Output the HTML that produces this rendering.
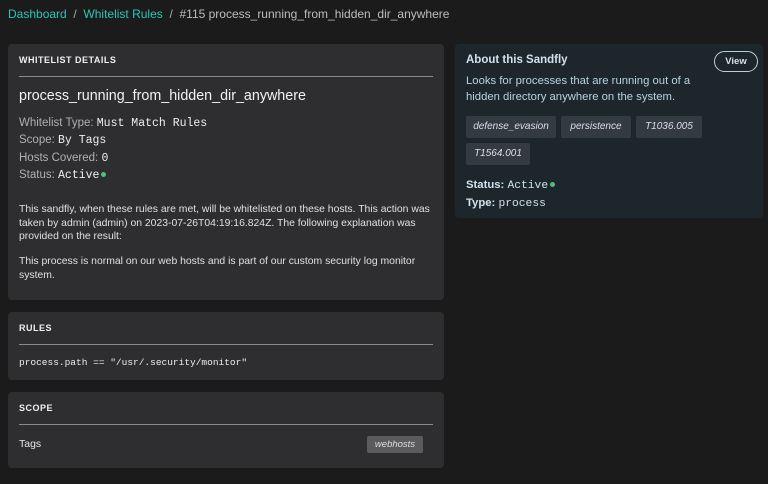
<!DOCTYPE html>
<html><head><style>
*{margin:0;padding:0;box-sizing:border-box}
body{width:768px;height:484px;background:#1b1b1c;font-family:"Liberation Sans",sans-serif;color:#e6e6e6;position:relative;overflow:hidden}
.a{position:absolute;white-space:nowrap}
.card{position:absolute;background:#2e2e30;border-radius:4px}
.h{font-size:9px;font-weight:bold;letter-spacing:.5px;color:#f0f0f0}
.hr{position:absolute;height:1px;background:#8a8a8a;left:11px;right:11px}
.m{font-family:"Liberation Mono",monospace;color:#eee}
.l{color:#b0b0b0}
.dot{display:inline-block;width:5px;height:5px;border-radius:50%;background:#4fbf80;margin-left:2px;vertical-align:1px}
.tag{position:absolute;background:#343b40;border-radius:2px;font-size:10px;font-style:italic;color:#dde;height:22px;line-height:22px;text-align:center}
</style></head><body>
<div class="a" style="left:8px;top:7px;font-size:12px"><span style="color:#2cc6b4">Dashboard</span> <span style="color:#aaa">&nbsp;/&nbsp;</span> <span style="color:#2cc6b4">Whitelist Rules</span> <span style="color:#aaa">&nbsp;/&nbsp;</span> <span style="color:#bdbdbd">#115 process_running_from_hidden_dir_anywhere</span></div>

<div class="card" style="left:8px;top:44px;width:436px;height:256px">
<div class="a h" style="left:11px;top:11px">WHITELIST DETAILS</div>
<div class="hr" style="top:32px"></div>
<div class="a" style="left:11px;top:44px;font-size:14.3px;color:#f2f2f2">process_running_from_hidden_dir_anywhere</div>
<div class="a" style="left:11px;top:71px;font-size:11.5px;line-height:16.3px"><span class="l">Whitelist Type:</span> <span class="m">Must Match Rules</span><br><span class="l">Scope:</span> <span class="m">By Tags</span><br><span class="l">Hosts Covered:</span> <span class="m">0</span><br><span class="l">Status:</span> <span class="m">Active</span><span class="dot"></span></div>
<div class="a" style="left:11px;top:159px;font-size:10.4px;line-height:13.5px;white-space:normal;width:416px;color:#e0e0e0">This sandfly, when these rules are met, will be whitelisted on these hosts. This action was taken by admin (admin) on 2023-07-26T04:19:16.824Z. The following explanation was provided on the result:</div>
<div class="a" style="left:11px;top:211px;font-size:10.4px;line-height:13.5px;white-space:normal;width:410px;color:#e0e0e0">This process is normal on our web hosts and is part of our custom security log monitor system.</div>
</div>

<div class="card" style="left:8px;top:312px;width:436px;height:68px">
<div class="a h" style="left:11px;top:11px">RULES</div>
<div class="hr" style="top:32px"></div>
<div class="a m" style="left:11px;top:45px;font-size:9.5px">process.path == "/usr/.security/monitor"</div>
</div>

<div class="card" style="left:8px;top:392px;width:436px;height:76px">
<div class="a h" style="left:11px;top:11px">SCOPE</div>
<div class="hr" style="top:32px"></div>
<div class="a" style="left:11px;top:46px;font-size:10.5px">Tags</div>
<div class="a" style="left:359px;top:44px;width:56px;height:17px;background:#5b5b5d;border-radius:2px;font-size:9.5px;font-style:italic;color:#ddd;text-align:center;line-height:17px">webhosts</div>
</div>

<div class="card" style="left:455px;top:44px;width:308px;height:174px;background:#1d262b">
<div class="a" style="left:11px;top:10px;font-size:11.5px;font-weight:bold;color:#cfe3ec">About this Sandfly</div>
<div class="a" style="left:259px;top:7px;width:44px;height:21px;border:1px solid #b9cfd6;border-radius:11px;font-size:9.5px;font-weight:bold;color:#dde;text-align:center;line-height:19px">View</div>
<div class="a" style="left:11px;top:29px;font-size:11.3px;line-height:16px;color:#b6d4e0">Looks for processes that are running out of a<br>hidden directory anywhere on the system.</div>
<div class="tag" style="left:11px;top:72px;width:90px">defense_evasion</div>
<div class="tag" style="left:106px;top:72px;width:70px">persistence</div>
<div class="tag" style="left:181px;top:72px;width:66px">T1036.005</div>
<div class="tag" style="left:11px;top:99px;width:64px">T1564.001</div>
<div class="a" style="left:11px;top:133px;font-size:11.3px;line-height:16.5px;font-weight:bold;color:#cfe3ec">Status: <span class="m" style="font-weight:normal;color:#cfe3ec">Active</span><span class="dot"></span><br>Type: <span class="m" style="font-weight:normal;color:#cfe3ec">process</span></div>
</div>
</body></html>
